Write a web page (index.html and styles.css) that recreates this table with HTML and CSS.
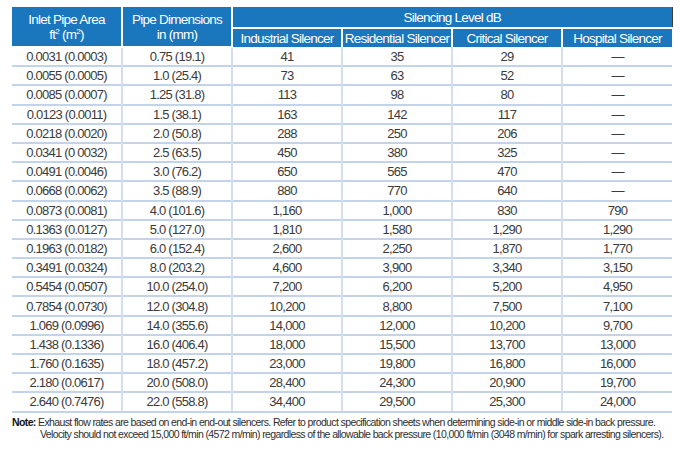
FILE: index.html
```html
<!DOCTYPE html>
<html>
<head>
<meta charset="utf-8">
<link rel="stylesheet" href="styles.css">
</head>
<body>
<div class="wrap">
<table class="spec">
  <colgroup>
    <col class="c"><col class="c"><col class="c"><col class="c"><col class="c"><col class="c">
  </colgroup>
  <thead>
    <tr class="h1">
      <th rowspan="2" class="hl">Inlet Pipe Area<br>ft<sup>2</sup> (m<sup>2</sup>)</th>
      <th rowspan="2" class="hl">Pipe Dimensions<br>in (mm)</th>
      <th colspan="4" class="group">Silencing Level dB</th>
    </tr>
    <tr class="h2">
      <th>Industrial Silencer</th>
      <th>Residential Silencer</th>
      <th>Critical Silencer</th>
      <th class="last">Hospital Silencer</th>
    </tr>
  </thead>
  <tbody>
    <tr><td>0.0031 (0.0003)</td><td>0.75 (19.1)</td><td>41</td><td>35</td><td>29</td><td>—</td></tr>
    <tr><td>0.0055 (0.0005)</td><td>1.0 (25.4)</td><td>73</td><td>63</td><td>52</td><td>—</td></tr>
    <tr><td>0.0085 (0.0007)</td><td>1.25 (31.8)</td><td>113</td><td>98</td><td>80</td><td>—</td></tr>
    <tr><td>0.0123 (0.0011)</td><td>1.5 (38.1)</td><td>163</td><td>142</td><td>117</td><td>—</td></tr>
    <tr><td>0.0218 (0.0020)</td><td>2.0 (50.8)</td><td>288</td><td>250</td><td>206</td><td>—</td></tr>
    <tr><td>0.0341 (0 0032)</td><td>2.5 (63.5)</td><td>450</td><td>380</td><td>325</td><td>—</td></tr>
    <tr><td>0.0491 (0.0046)</td><td>3.0 (76.2)</td><td>650</td><td>565</td><td>470</td><td>—</td></tr>
    <tr><td>0.0668 (0.0062)</td><td>3.5 (88.9)</td><td>880</td><td>770</td><td>640</td><td>—</td></tr>
    <tr><td>0.0873 (0.0081)</td><td>4.0 (101.6)</td><td>1,160</td><td>1,000</td><td>830</td><td>790</td></tr>
    <tr><td>0.1363 (0.0127)</td><td>5.0 (127.0)</td><td>1,810</td><td>1,580</td><td>1,290</td><td>1,290</td></tr>
    <tr><td>0.1963 (0.0182)</td><td>6.0 (152.4)</td><td>2,600</td><td>2,250</td><td>1,870</td><td>1,770</td></tr>
    <tr><td>0.3491 (0.0324)</td><td>8.0 (203.2)</td><td>4,600</td><td>3,900</td><td>3,340</td><td>3,150</td></tr>
    <tr><td>0.5454 (0.0507)</td><td>10.0 (254.0)</td><td>7,200</td><td>6,200</td><td>5,200</td><td>4,950</td></tr>
    <tr><td>0.7854 (0.0730)</td><td>12.0 (304.8)</td><td>10,200</td><td>8,800</td><td>7,500</td><td>7,100</td></tr>
    <tr><td>1.069 (0.0996)</td><td>14.0 (355.6)</td><td>14,000</td><td>12,000</td><td>10,200</td><td>9,700</td></tr>
    <tr><td>1.438 (0.1336)</td><td>16.0 (406.4)</td><td>18,000</td><td>15,500</td><td>13,700</td><td>13,000</td></tr>
    <tr><td>1.760 (0.1635)</td><td>18.0 (457.2)</td><td>23,000</td><td>19,800</td><td>16,800</td><td>16,000</td></tr>
    <tr><td>2.180 (0.0617)</td><td>20.0 (508.0)</td><td>28,400</td><td>24,300</td><td>20,900</td><td>19,700</td></tr>
    <tr><td>2.640 (0.7476)</td><td>22.0 (558.8)</td><td>34,400</td><td>29,500</td><td>25,300</td><td>24,000</td></tr>
  </tbody>
</table>
<div class="note">
  <p class="n1"><b>Note:</b> Exhaust flow rates are based on end-in end-out silencers. Refer to product specification sheets when determining side-in or middle side-in back pressure.</p>
  <p class="n2">Velocity should not exceed 15,000 ft/min (4572 m/min) regardless of the allowable back pressure (10,000 ft/min (3048 m/min) for spark arresting silencers).</p>
</div>
</div>
</body>
</html>
```

FILE: styles.css
```css
html, body {
  margin: 0;
  padding: 0;
  background: #ffffff;
}
body {
  font-family: "Liberation Sans", Arial, sans-serif;
  color: #3a3a3a;
}
.wrap {
  padding: 7px 11px 0 12px;
}
.spec {
  border-collapse: collapse;
  table-layout: fixed;
  width: 660px;
}
.c {
  width: 110px;
}
.spec th {
  background: #1a76bd;
  color: #ffffff;
  font-weight: normal;
  font-size: 13.5px;
  letter-spacing: -0.75px;
  line-height: 15px;
  border: 2px solid #ffffff;
  padding: 0;
  text-align: center;
  white-space: nowrap;
}
.spec th sup {
  font-size: 8px;
  line-height: 0;
  vertical-align: 5px;
}
.spec thead tr th:first-child {
  border-left: none;
}
.spec .h1 th {
  border-top: none;
}
.spec .h1 th.hl {
  height: 38px;
  padding-top: 1px;
}
.spec .h1 th.group {
  height: 19px;
  border-right: 1px solid #3c3c3c;
  border-bottom: 2px solid #ffffff;
}
.spec .h2 th {
  height: 17px;
  border-bottom: none;
}
.spec .h2 th.last {
  border-right: none;
}
.spec td {
  font-size: 13px;
  letter-spacing: -0.75px;
  text-align: center;
  height: 17.2px;
  padding: 0;
  line-height: 15px;
  border-top: 2px solid #c3d3ea;
  border-left: 2px solid #d3dff0;
  border-right: 2px solid #d3dff0;
  white-space: nowrap;
}
.spec tbody tr:first-child td {
  border-top: none;
}
.spec tbody tr:last-child td {
  border-bottom: 2px solid #c3d3ea;
}
.spec td:first-child {
  border-left: none;
}
.spec td:last-child {
  border-right: none;
}
.note {
  font-size: 10.5px;
  letter-spacing: -0.62px;
  line-height: 12px;
  color: #2e2e2e;
  margin-top: 3px;
  white-space: nowrap;
}
.note p {
  margin: 0;
}
.note b {
  color: #111;
}
.n2 {
  padding-left: 28px;
}
```
